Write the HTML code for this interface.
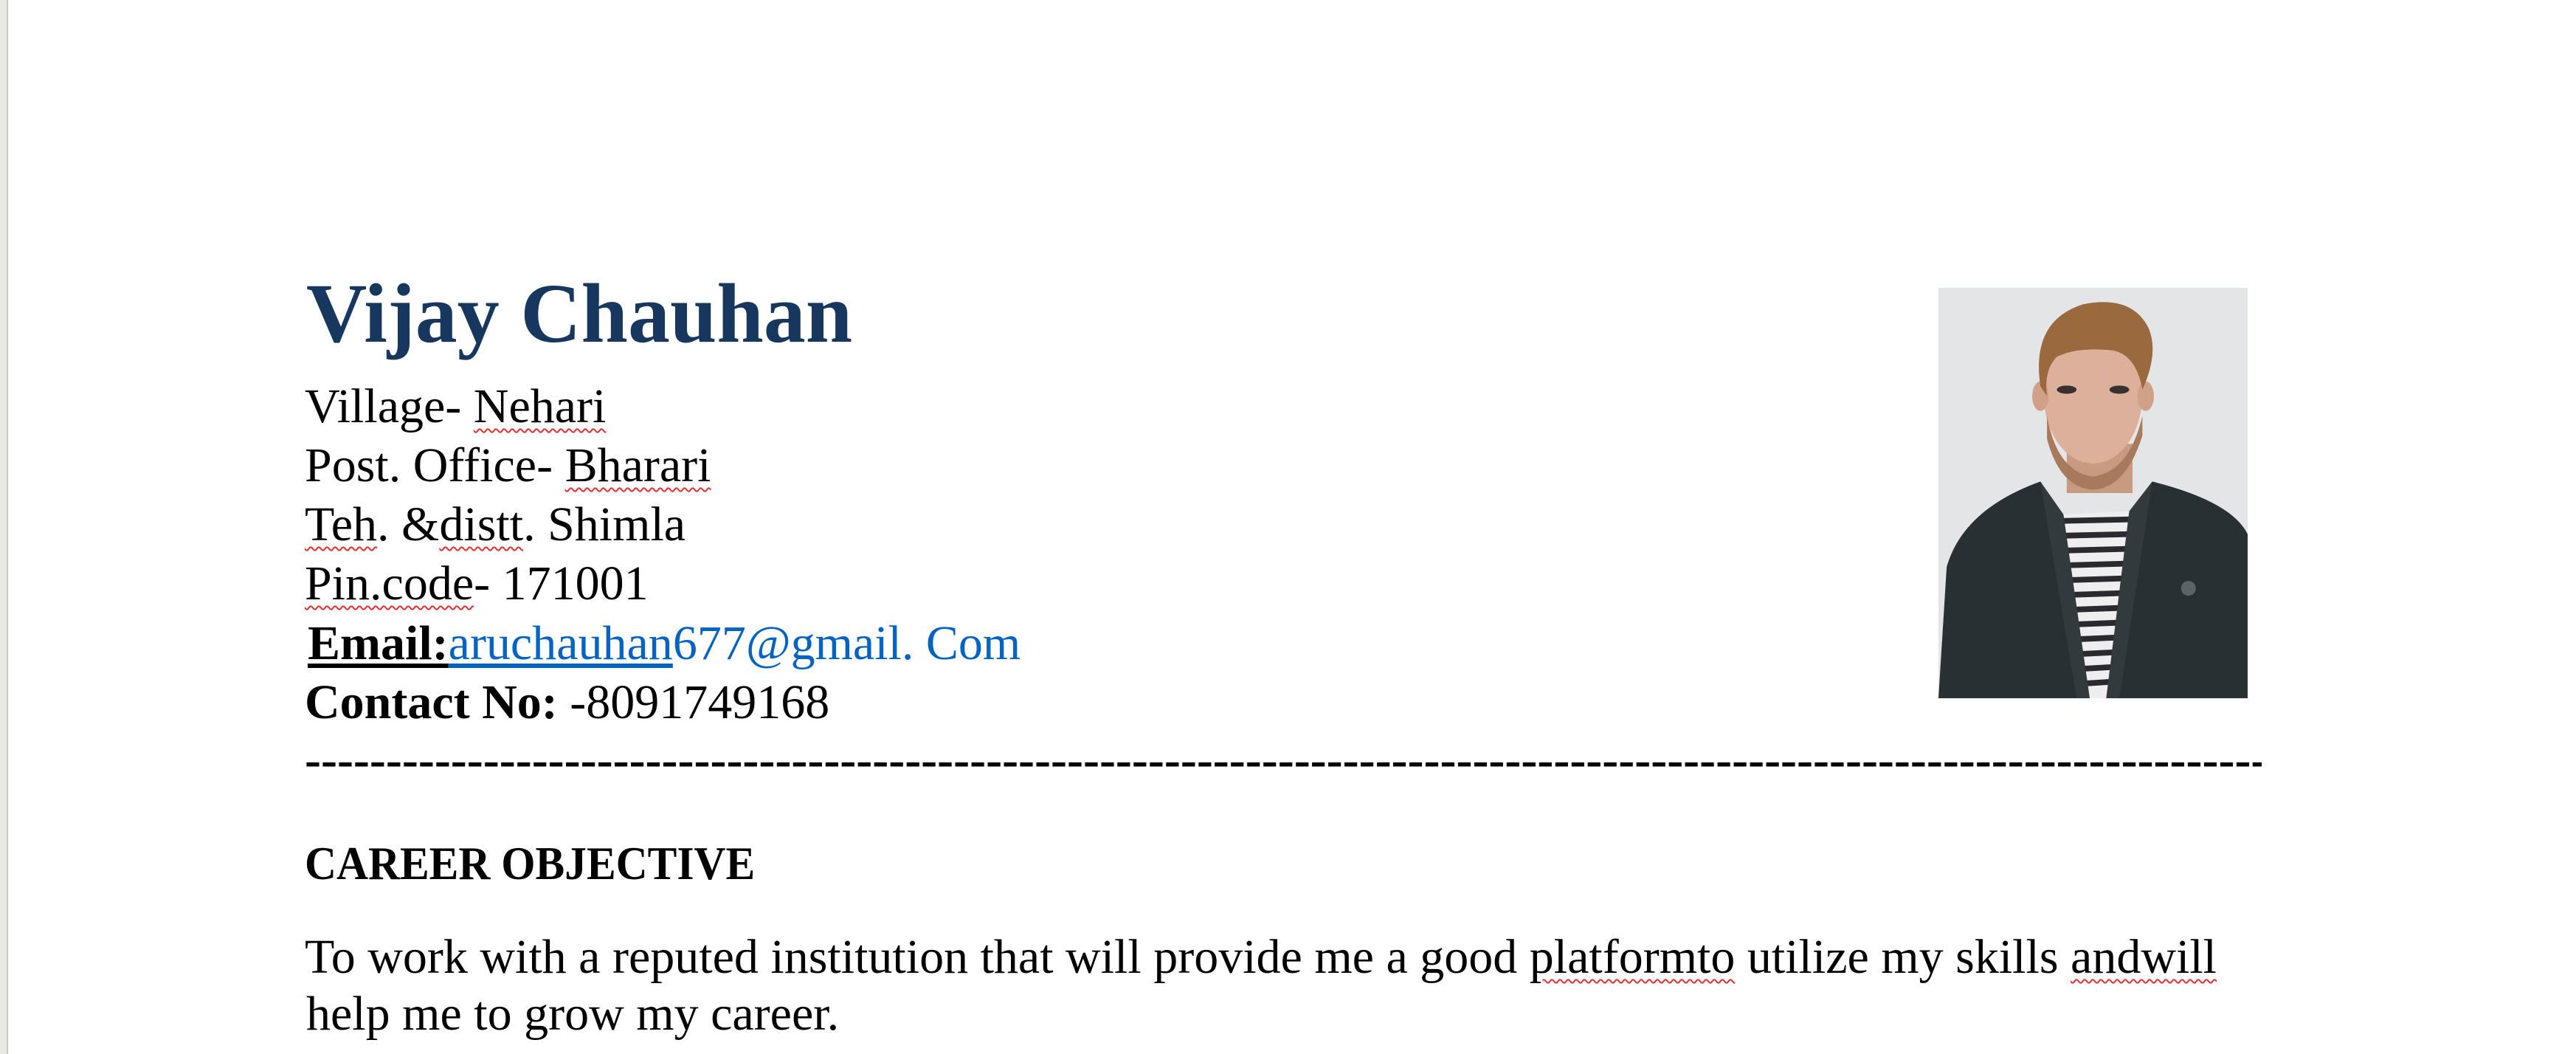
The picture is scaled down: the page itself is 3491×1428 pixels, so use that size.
<!DOCTYPE html>
<html><head><meta charset="utf-8"><style>
html,body{margin:0;padding:0;}
body{width:3491px;height:1428px;position:relative;overflow:hidden;background:#fff;font-family:"Liberation Serif",serif;color:#000;}
.t{position:absolute;white-space:nowrap;line-height:1;}
.b{font-size:66px;left:413px;}
.sq{text-decoration:underline wavy #e03030;text-decoration-thickness:2px;text-underline-offset:8px;}
</style></head><body>
<div style="position:absolute;left:0;top:0;width:9px;height:1428px;background:#e9ebe3;"></div>
<div style="position:absolute;left:9px;top:0;width:2px;height:1428px;background:#c9cbc4;"></div>

<div class="t" style="left:415px;top:368px;font-size:114px;font-weight:bold;color:#17375e;">Vijay Chauhan</div>

<div class="t b" style="top:518px;">Village- <span class="sq">Nehari</span></div>
<div class="t b" style="top:598px;">Post. Office- <span class="sq">Bharari</span></div>
<div class="t b" style="top:678px;"><span class="sq">Teh</span>. &amp;<span class="sq">distt</span>. Shimla</div>
<div class="t b" style="top:758px;"><span class="sq">Pin.code</span>- 171001</div>
<div class="t b" style="top:839px;left:417px;"><b style="text-decoration:underline;text-underline-offset:6px;">Email:</b><span style="color:#0563c1;"><span style="text-decoration:underline;text-underline-offset:6px;">aruchauhan</span>677@gmail. Com</span></div>
<div class="t b" style="top:919px;"><b>Contact No:</b> -8091749168</div>

<div class="t" style="left:413px;top:997px;width:2652px;overflow:hidden;font-size:66px;font-weight:bold;">------------------------------------------------------------------------------------------------------------------------------------------------------</div>

<div class="t" style="left:413px;top:1138px;font-size:64px;font-weight:bold;transform:scaleX(0.93);transform-origin:0 0;">CAREER OBJECTIVE</div>
<div class="t b" style="top:1264px;">To work with a reputed institution that will provide me a good <span class="sq">platformto</span> utilize my skills <span class="sq">andwill</span></div>
<div class="t b" style="top:1341px;left:415px;">help me to grow my career.</div>

<svg style="position:absolute;left:2627px;top:390px;" width="419" height="556" viewBox="0 0 188 250" preserveAspectRatio="none">
<rect width="188" height="250" fill="#e4e5e6"/>
<path d="M78 95 L78 125 L118 125 L118 95 Z" fill="#c89a80"/>
<ellipse cx="94" cy="65" rx="30" ry="42" fill="#dcb09a"/>
<path d="M66 78 Q72 112 94 115 Q116 112 124 78 L124 90 Q114 122 94 123 Q74 122 66 92 Z" fill="#a87a5c"/>
<ellipse cx="62" cy="66" rx="5" ry="9" fill="#d0a088"/>
<ellipse cx="126" cy="66" rx="5" ry="9" fill="#d0a088"/>
<path d="M62 60 Q56 20 88 10 Q118 4 128 25 Q134 40 124 62 Q120 40 105 38 Q84 36 72 42 Q64 50 66 66 Z" fill="#9a6a3e"/>
<ellipse cx="78" cy="62" rx="6" ry="2.5" fill="#3a3030"/>
<ellipse cx="110" cy="62" rx="6" ry="2.5" fill="#3a3030"/>
<path d="M0 250 L5 170 Q15 135 62 118 L75 140 L90 240 L92 250 Z" fill="#283033"/>
<path d="M188 250 L188 150 Q178 130 130 118 L115 140 L100 240 L98 250 Z" fill="#283033"/>
<path d="M76 138 L116 136 L104 250 L90 250 Z" fill="#eeeeee"/>
<g stroke="#2a2a2e" stroke-width="3.5">
<line x1="74" y1="142" x2="118" y2="141"/><line x1="75" y1="151" x2="117" y2="150"/>
<line x1="77" y1="160" x2="115" y2="159"/><line x1="78" y1="169" x2="114" y2="168"/>
<line x1="80" y1="178" x2="113" y2="177"/><line x1="81" y1="187" x2="111" y2="186"/>
<line x1="83" y1="196" x2="110" y2="195"/><line x1="84" y1="205" x2="109" y2="204"/>
<line x1="86" y1="214" x2="108" y2="213"/><line x1="87" y1="223" x2="107" y2="222"/>
<line x1="88" y1="232" x2="106" y2="231"/><line x1="89" y1="241" x2="105" y2="240"/>
</g>
<path d="M62 118 L76 138 L92 250 L84 250 Z" fill="#323a3d"/>
<path d="M130 118 L116 136 L102 250 L110 250 Z" fill="#323a3d"/>
<circle cx="152" cy="183" r="4.5" fill="#5a6568"/>
</svg>
</body></html>
